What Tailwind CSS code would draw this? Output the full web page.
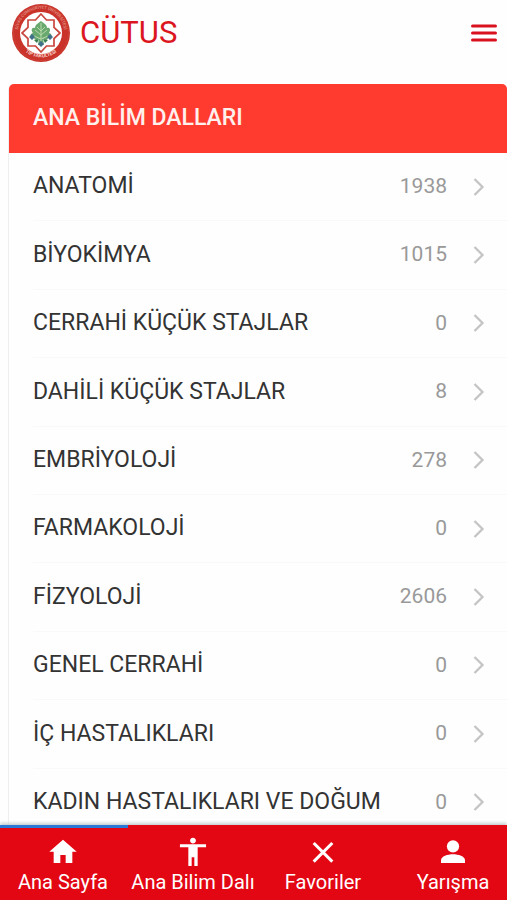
<!DOCTYPE html>
<html lang="tr">
<head>
<meta charset="utf-8">
<meta name="viewport" content="width=device-width, initial-scale=1">
<title>CÜTUS</title>
<script src="https://cdn.jsdelivr.net/npm/@tailwindcss/browser@4"></script>
</head>
<body class="flex h-screen flex-col overflow-hidden bg-[#fefefe] font-[Roboto,sans-serif] text-[#333]">
<header class="flex h-[66px] shrink-0 items-center pl-3 pr-2">
  <a href="#" class="flex items-center gap-2 text-[#dc1620]">
    <svg class="size-[60px]" viewBox="0 0 60 60" fill="none" aria-hidden="true">
      <circle cx="29" cy="30" r="29" fill="#c9332a"/>
      <circle cx="29" cy="30" r="21" fill="#fff"/>
      <circle cx="29" cy="30" r="27.500" stroke="#d0463c" stroke-width=".6"/>
      <path id="arc-top" d="M9.500 41A23 23 0 1 1 48.500 41"/>
      <path id="arc-bottom" d="M9 45A26 26 0 0 0 49 45"/>
      <text fill="#e0887c" font-size="4.200" font-weight="700"><textPath href="#arc-top" startOffset="50%" text-anchor="middle">SİVAS CUMHURİYET ÜNİVERSİTESİ</textPath></text>
      <text fill="#f7d0c8" font-size="5" font-weight="700"><textPath href="#arc-bottom" startOffset="50%" text-anchor="middle">TIP FAKÜLTESİ</textPath></text>
      <path d="M29 11L34.500 17H42V24.500L48 30L42 35.500V43H34.500L29 49L23.500 43H16V35.500L10 30L16 24.500V17H23.500Z" stroke="#c9463e" stroke-width="1.700"/>
      <path d="M29 18C25 21 23 22 23 25C19 24 19 28 21 30C17 31 18 35 22 35C23 38 26 37 27 35L26 42H32L31 35C33 38 36 37 36 35C40 35 41 31 37 30C39 27 38 24 35 25C35 22 33 21 29 18Z" fill="#69a86e"/>
      <path d="M29 20V38M23 27L29 32L35 27M22 33L29 36L36 33M25 24L29 28L33 24" stroke="#b9d9a9" stroke-width="1"/>
      <path d="M17 34L20 31L23 34L20 37ZM35 34L38 31L41 34L38 37ZM26 41L29 38L32 41L29 44Z" fill="#41718a"/>
      <path d="M22 37L27 36L25 40ZM36 37L31 36L33 40Z" fill="#347c4b"/>
    </svg>
    <span class="text-[31px] leading-10">CÜTUS</span>
  </a>
  <button type="button" aria-label="Menü" class="ml-auto flex size-8 items-center justify-center">
    <svg class="h-5 w-7" viewBox="0 0 28 20" stroke="#d9101e" stroke-width="3" stroke-linecap="round" aria-hidden="true"><path d="M3.500 3H26.500M3.500 10H26.500M3.500 17H26.500"/></svg>
  </button>
</header>

<main class="min-h-0 flex-1 overflow-hidden pl-2 pt-[18px]">
  <section class="rounded-t-md border-l border-[#eee]">
    <h1 class="flex h-[69px] items-center rounded-t-[5px] bg-[#ff3b30] pl-6 text-[23px] font-medium text-[#fff0ee]">ANA BİLİM DALLARI</h1>
    <ul id="list" class="grid min-h-[684px] auto-rows-fr pl-6 text-[23px]"></ul>
  </section>
</main>

<nav class="relative z-10 flex h-[75px] shrink-0 bg-[#e30613] text-xl leading-6 text-white shadow-[0_-2px_3px_#c5d0d0]">
  <span class="absolute left-0 top-0 h-[3px] w-32 bg-[#2878d8]"></span>
  <div class="-ml-[2px] flex">
    <a href="#" class="flex w-[130px] shrink-0 flex-col items-center gap-[3px] pt-[10px]">
      <svg class="size-8" viewBox="0 0 24 24" fill="currentColor" aria-hidden="true"><path d="M10 21v-6h4v6h5v-8.500h3.300L12 3.500 1.700 12.500H5V21z"/></svg>
      <span class="whitespace-nowrap">Ana Sayfa</span>
    </a>
    <a href="#" class="flex w-[130px] shrink-0 flex-col items-center gap-[3px] pt-[10px]">
      <svg class="size-8" viewBox="0 0 24 24" fill="currentColor" aria-hidden="true"><path d="M12 2c1.100 0 2.200 .9 2.200 2.200s-.9 2.200-2.200 2.200-2.200-.9-2.200-2.200 .9-2.200 2.200-2.200zm9.800 7.200H15.500v14h-2.500v-6.500h-2v6.500H8.500V9.200H2.200V7h19.600z"/></svg>
      <span class="whitespace-nowrap">Ana Bilim Dalı</span>
    </a>
    <a href="#" class="flex w-[130px] shrink-0 flex-col items-center gap-[3px] pt-[10px]">
      <svg class="size-8" viewBox="0 0 24 24" fill="none" stroke="currentColor" stroke-width="2.300" aria-hidden="true"><path d="M5 6L19 20M19 6L5 20"/></svg>
      <span class="whitespace-nowrap">Favoriler</span>
    </a>
    <a href="#" class="flex w-[130px] shrink-0 flex-col items-center gap-[3px] pt-[10px]">
      <svg class="size-8" viewBox="0 0 24 24" fill="currentColor" aria-hidden="true"><circle cx="12" cy="8.500" r="4.600"/><path d="M3 21V19c0-3 5-4.500 9-4.500s9 1.500 9 4.500v2z"/></svg>
      <span class="whitespace-nowrap">Yarışma</span>
    </a>
  </div>
</nav>

<script>
const departments = [
  ["ANATOMİ", 1938], ["BİYOKİMYA", 1015], ["CERRAHİ KÜÇÜK STAJLAR", 0],
  ["DAHİLİ KÜÇÜK STAJLAR", 8], ["EMBRİYOLOJİ", 278], ["FARMAKOLOJİ", 0],
  ["FİZYOLOJİ", 2606], ["GENEL CERRAHİ", 0], ["İÇ HASTALIKLARI", 0],
  ["KADIN HASTALIKLARI VE DOĞUM", 0]
];
document.getElementById("list").innerHTML = departments.map(([name, count]) => `
  <li class="border-b border-[#f9f9f9]">
    <a href="#" class="flex h-full items-center pr-[22px]">
      <span class="whitespace-nowrap">${name}</span>
      <span class="ml-auto text-[21px] text-[#999]">${count}</span>
      <svg class="ml-[26px] h-5 w-3" viewBox="0 0 12 20" fill="none" stroke="#c4c4c4" stroke-width="2.300" aria-hidden="true"><path d="M1.500 2L9.500 10L1.500 18"/></svg>
    </a>
  </li>`).join("");
</script>
</body>
</html>
